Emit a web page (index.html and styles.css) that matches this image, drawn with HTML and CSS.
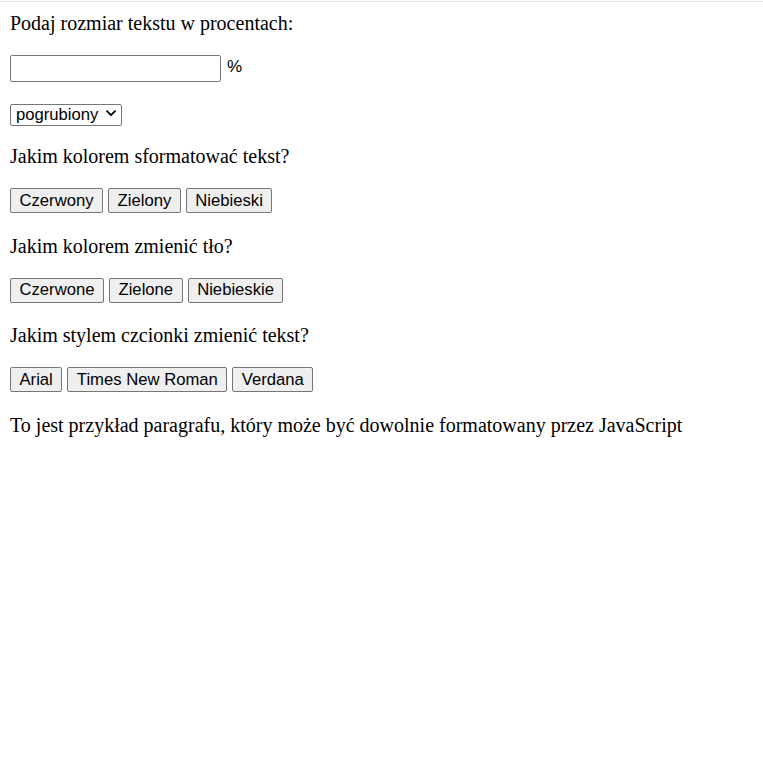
FILE: index.html
```html
<!DOCTYPE html>
<html lang="pl">
<head>
<meta charset="utf-8">
<title>Formatowanie tekstu</title>
<link rel="stylesheet" href="styles.css">
</head>
<body>
<div class="page">
  <p class="label first">Podaj rozmiar tekstu w procentach:</p>
  <div class="size-row">
    <input class="size-input" type="text">
    <span class="unit">%</span>
  </div>
  <div class="select-row">
    <span class="select-wrap">
      <select class="weight">
        <option>pogrubiony</option>
        <option>normalny</option>
      </select>
      <svg class="chevron" width="10" height="7" viewBox="0 0 10 7" aria-hidden="true">
        <path d="M1 1.2 L5 5.2 L9 1.2" fill="none" stroke="#000" stroke-width="1.9" stroke-linecap="round" stroke-linejoin="round"/>
      </svg>
    </span>
  </div>
  <p class="label">Jakim kolorem sformatować tekst?</p>
  <div class="btn-row">
    <button class="btn">Czerwony</button>
    <button class="btn">Zielony</button>
    <button class="btn">Niebieski</button>
  </div>
  <p class="label">Jakim kolorem zmienić tło?</p>
  <div class="btn-row">
    <button class="btn">Czerwone</button>
    <button class="btn">Zielone</button>
    <button class="btn">Niebieskie</button>
  </div>
  <p class="label">Jakim stylem czcionki zmienić tekst?</p>
  <div class="btn-row">
    <button class="btn">Arial</button>
    <button class="btn">Times New Roman</button>
    <button class="btn">Verdana</button>
  </div>
  <p class="label">To jest przykład paragrafu, który może być dowolnie formatowany przez JavaScript</p>
</div>
</body>
</html>
```
FILE: styles.css
```css
html {
  background: #ffffff;
}
body {
  margin: 0;
  border-top: 1px solid #ffffff;
  font-family: "Liberation Serif", "Times New Roman", serif;
  font-size: 20px;
  color: #000000;
}
.page {
  border-top: 1px solid #e3e3e3;
  padding: 10px 10px 20px 10px;
}
.label {
  margin: 20px 0 0 0;
  font-size: 20px;
  line-height: 23px;
}
.label.first {
  margin-top: 0;
}
.size-row {
  display: flex;
  align-items: flex-start;
  gap: 6px;
  height: 27px;
  margin-top: 20px;
}
.size-input {
  box-sizing: border-box;
  width: 211px;
  height: 26.5px;
  margin: 0;
  padding: 1px 3px;
  border: 1px solid #767676;
  border-radius: 2px;
  font-family: "Liberation Sans", Arial, sans-serif;
  font-size: 16.67px;
  background: #ffffff;
}
.unit {
  margin-top: 1.5px;
  font-family: "Liberation Sans", Arial, sans-serif;
  font-size: 17px;
  line-height: 19px;
}
.select-row {
  display: flex;
  align-items: flex-start;
  height: 23px;
  margin-top: 20px;
}
.select-wrap {
  position: relative;
  display: inline-block;
  height: 22.5px;
}
.weight {
  -webkit-appearance: none;
  appearance: none;
  box-sizing: border-box;
  width: 112px;
  height: 22.5px;
  margin: 0;
  padding: 0 0 0 5px;
  border: 1px solid #767676;
  border-radius: 2px;
  background: #ffffff;
  color: #000000;
  font-family: "Liberation Sans", Arial, sans-serif;
  font-size: 16.67px;
  line-height: 20px;
}
.chevron {
  position: absolute;
  right: 6px;
  top: 8px;
  pointer-events: none;
}
.btn-row {
  display: flex;
  align-items: flex-start;
  gap: 5px;
  height: 26.5px;
  margin-top: 20px;
}
.btn {
  box-sizing: border-box;
  height: 25.3px;
  margin: 0;
  padding: 0 8.5px;
  border: 1px solid #767676;
  border-radius: 2px;
  background: #efefef;
  color: #000000;
  font-family: "Liberation Sans", Arial, sans-serif;
  font-size: 16.67px;
  line-height: 20px;
}
```
